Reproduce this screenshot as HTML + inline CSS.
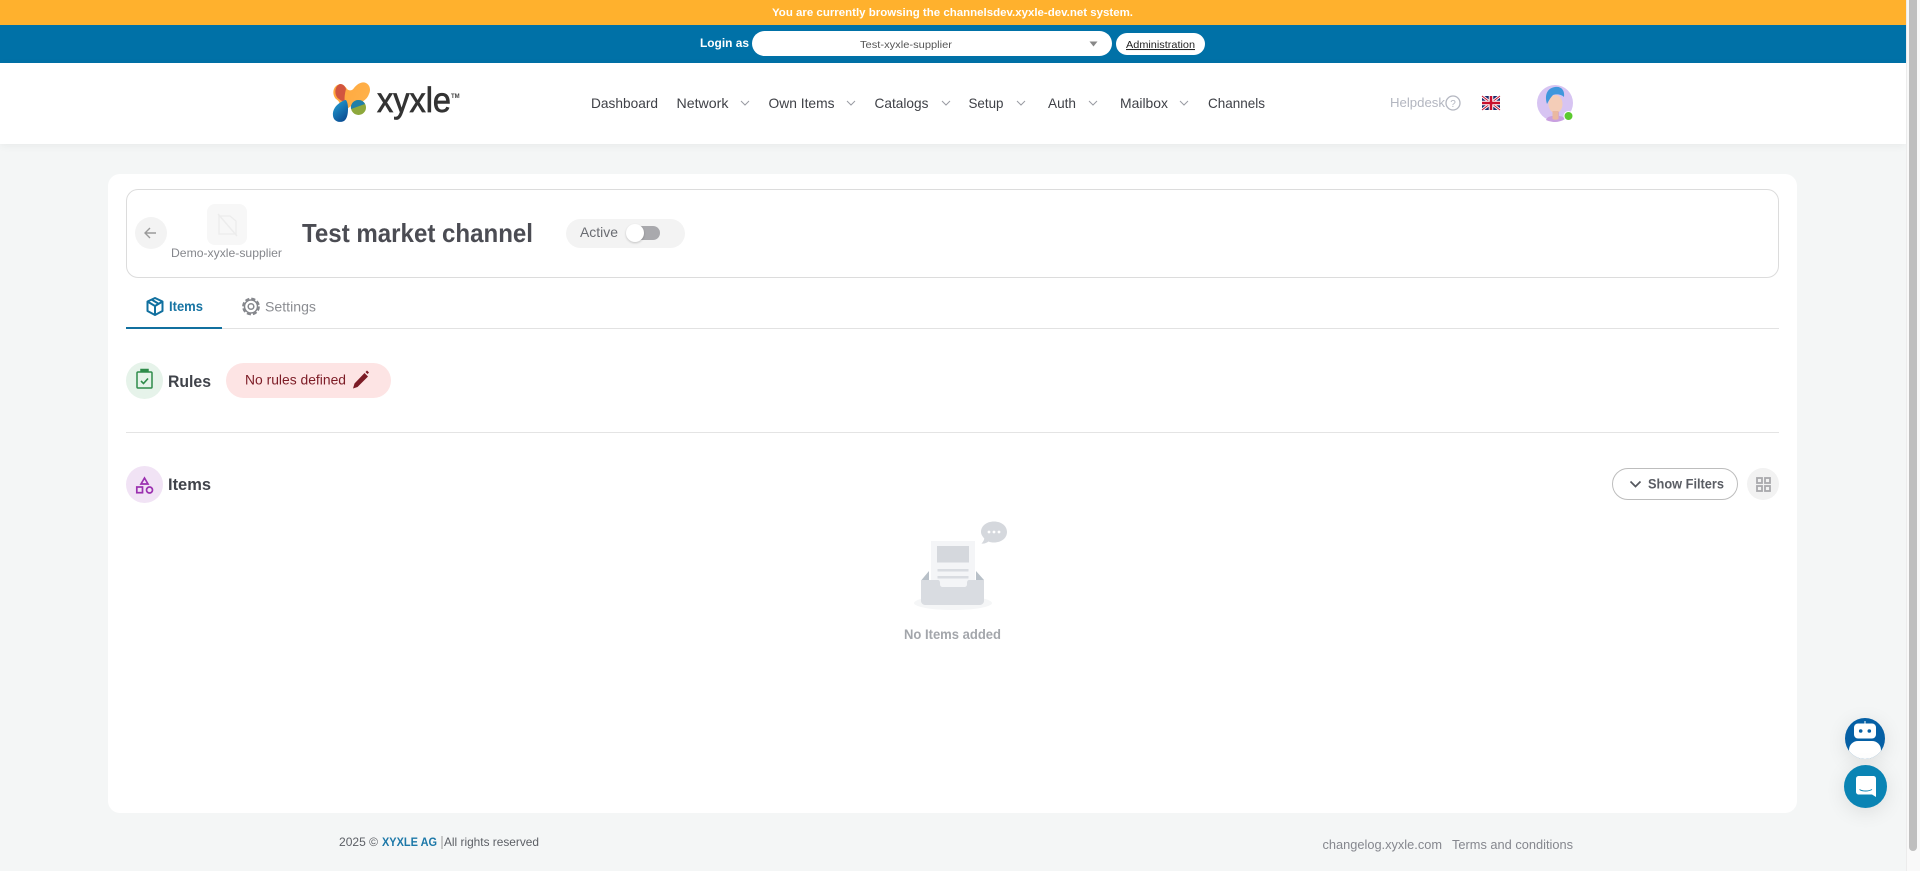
<!DOCTYPE html>
<html lang="en"><head><meta charset="utf-8"><title>Test market channel</title>
<style>
html,body{margin:0;padding:0;width:1920px;height:871px;overflow:hidden;background:#f4f6f6;font-family:"Liberation Sans",sans-serif}
.a{position:absolute;box-sizing:border-box}
svg{position:absolute;left:0;top:0}
text{font-family:"Liberation Sans",sans-serif}
</style></head><body>
<div class="a" style="left:0;top:0;width:1906px;height:25px;background:#ffb12d"></div>
<div class="a" style="left:0;top:25px;width:1906px;height:38px;background:#0071a7"></div>
<div class="a" style="left:0;top:63px;width:1906px;height:81px;background:#fff;box-shadow:0 2px 8px rgba(0,0,0,.05)"></div>
<div class="a" style="left:752px;top:31px;width:360px;height:25px;background:#fff;border-radius:13px"></div>
<div class="a" style="left:1116px;top:33px;width:89px;height:22px;background:#fff;border-radius:11px"></div>
<div class="a" style="left:108px;top:174px;width:1689px;height:639px;background:#fff;border-radius:12px"></div>
<div class="a" style="left:126px;top:189px;width:1653px;height:89px;border:1px solid #dcdcdc;border-radius:12px"></div>
<div class="a" style="left:135px;top:217px;width:32px;height:32px;background:#f3f3f3;border-radius:50%"></div>
<div class="a" style="left:207px;top:204px;width:40px;height:41px;background:#f7f7f7;border-radius:8px"></div>
<div class="a" style="left:566px;top:219px;width:119px;height:29px;background:#f3f3f3;border-radius:15px"></div>
<div class="a" style="left:630px;top:226px;width:30px;height:14px;background:#a9a9ad;border-radius:7px"></div>
<div class="a" style="left:626px;top:224px;width:18px;height:18px;background:#fff;border-radius:50%;box-shadow:0 1px 2px rgba(0,0,0,.2)"></div>
<div class="a" style="left:126px;top:328px;width:1653px;height:1px;background:#e2e2e2"></div>
<div class="a" style="left:126px;top:327px;width:96px;height:2px;background:#11709f"></div>
<div class="a" style="left:126px;top:362px;width:37px;height:37px;background:#e6f3ea;border-radius:50%"></div>
<div class="a" style="left:226px;top:363px;width:165px;height:35px;background:#fde4e4;border-radius:18px"></div>
<div class="a" style="left:126px;top:432px;width:1653px;height:1px;background:#e4e4e4"></div>
<div class="a" style="left:126px;top:466px;width:37px;height:37px;background:#f1e3f5;border-radius:50%"></div>
<div class="a" style="left:1612px;top:468px;width:126px;height:32px;border:1px solid #bdbdbd;border-radius:16px;background:#fff"></div>
<div class="a" style="left:1747px;top:468px;width:32px;height:32px;background:#f2f2f2;border-radius:50%"></div>
<div class="a" style="left:1845px;top:718px;width:40px;height:41px;border-radius:50%;background:#0560a5;box-shadow:0 4px 20px rgba(0,0,0,.1);overflow:hidden">
  <div class="a" style="left:4px;top:23px;width:32px;height:18px;background:#fff;border-radius:11px"></div>
</div>
<div class="a" style="left:1844px;top:765px;width:43px;height:43px;border-radius:50%;background:#0a84b4;box-shadow:0 4px 20px rgba(0,0,0,.1)"></div>
<div class="a" style="left:1906px;top:0;width:14px;height:871px;background:#f9f9f9;border-left:1px solid #ececec"></div>
<div class="a" style="left:1909px;top:0;width:8px;height:851px;background:#bfbfbf;border-radius:0 0 4px 4px"></div>

<svg width="1920" height="871" viewBox="0 0 1920 871" xmlns="http://www.w3.org/2000/svg">
<defs>
<linearGradient id="lo" x1="0" y1="0" x2="1" y2="0.4"><stop offset="0" stop-color="#ffa63c"/><stop offset="1" stop-color="#ffb14a"/></linearGradient>
<linearGradient id="lb" x1="0" y1="0" x2="0.6" y2="1"><stop offset="0" stop-color="#26a6d8"/><stop offset="1" stop-color="#0b4f95"/></linearGradient>
</defs>
<text x="772" y="16" font-size="11" font-weight="700" fill="#fff" textLength="361" lengthAdjust="spacingAndGlyphs">You are currently browsing the channelsdev.xyxle-dev.net system.</text>
<text x="700" y="47" font-size="12" font-weight="700" fill="#fff" textLength="49" lengthAdjust="spacingAndGlyphs">Login as</text>
<text x="860" y="48" font-size="10.5" fill="#555" textLength="92" lengthAdjust="spacingAndGlyphs">Test-xyxle-supplier</text>
<path d="M1089.500 41.500h8l-4 5z" fill="#888"/>
<text x="1126" y="48" font-size="10.5" fill="#222" textLength="69" lengthAdjust="spacingAndGlyphs" text-decoration="underline">Administration</text>

<!-- logo -->
<path d="M340 84c3 0 5 2 7 5 2 2 5 2 7-1 3-4 8-7 12-5 4 2 5 7 3 11-2 6-8 9-13 10-6 2-9 5-12 8-4 1-5-3-4-6 0-3-1-5-4-7-4-4-4-13 4-15z" fill="url(#lo)"/>
<path d="M340 84c3 0 5 2 6 5-1 4-2 9-1 13-2-1-4-1-6-3-5-3-5-13 1-15z" fill="#d2553f"/>
<path d="M346 100c2 3 2 7 2 9 0 5-1 10-4 12-4 2-10 1-11-5-1-6 3-11 8-14 2-1 3-2 5-2z" fill="url(#lb)"/>
<circle cx="358.500" cy="107.500" r="7.500" fill="#8ea83c"/>
<path d="M358 100a7.500 7.500 0 0 0-7 9l14-5a7.500 7.500 0 0 0-7-4z" fill="#1f7fa8"/>
<text x="377" y="112" font-size="35" fill="#333" stroke="#333" stroke-width=".7" textLength="74" lengthAdjust="spacingAndGlyphs">xyxle</text>
<text x="451" y="98" font-size="6" font-weight="700" fill="#444">TM</text>

<!-- nav -->
<g font-size="14" fill="#3f4147">
<text x="591" y="108" textLength="67" lengthAdjust="spacingAndGlyphs">Dashboard</text>
<text x="676.500" y="108" textLength="52" lengthAdjust="spacingAndGlyphs">Network</text>
<text x="768.500" y="108" textLength="66" lengthAdjust="spacingAndGlyphs">Own Items</text>
<text x="874.500" y="108" textLength="54" lengthAdjust="spacingAndGlyphs">Catalogs</text>
<text x="968.500" y="108" textLength="35" lengthAdjust="spacingAndGlyphs">Setup</text>
<text x="1048" y="108" textLength="28" lengthAdjust="spacingAndGlyphs">Auth</text>
<text x="1120" y="108" textLength="48" lengthAdjust="spacingAndGlyphs">Mailbox</text>
<text x="1208" y="108" textLength="57" lengthAdjust="spacingAndGlyphs">Channels</text>
</g>
<g fill="none" stroke="#9a9ca3" stroke-width="1">
<path d="M741 101l4 4 4-4M847 101l4 4 4-4M942 101l4 4 4-4M1017 101l4 4 4-4M1089 101l4 4 4-4M1180 101l4 4 4-4"/>
</g>
<text x="1390" y="107" font-size="13" fill="#b3b6c0" textLength="55" lengthAdjust="spacingAndGlyphs">Helpdesk</text>
<circle cx="1453" cy="103" r="7" fill="none" stroke="#b3b6c0" stroke-width="1.300"/>
<text x="1453" y="107" font-size="10" fill="#b3b6c0" text-anchor="middle">?</text>
<!-- flag -->
<g>
<rect x="1482" y="96" width="18" height="14" fill="#1b2a6b"/>
<path d="M1482 96l18 14M1500 96l-18 14" stroke="#fff" stroke-width="3"/>
<path d="M1482 96l18 14M1500 96l-18 14" stroke="#c8102e" stroke-width="1"/>
<path d="M1491 96v14M1482 103h18" stroke="#fff" stroke-width="4.500"/>
<path d="M1491 96v14M1482 103h18" stroke="#c8102e" stroke-width="2.500"/>
</g>
<!-- avatar -->
<circle cx="1555" cy="103" r="18" fill="#d7c4f2"/>
<path d="M1546 120c1-3 4-4 7-4v-5h6v5c2 0 5 1 6 3-3 2-7 3-10 3s-7-1-9-2z" fill="#c9a0e0"/>
<ellipse cx="1555.500" cy="104" rx="7" ry="9" fill="#f4cdb8"/>
<path d="M1547 104c-3-10 1-16 8-17 6-1 10 3 9 10-3-3-8-3-11-2-2 2-4 5-6 9z" fill="#3f97dc"/>
<path d="M1552.500 111h6v8c-2 1-4 1-6 0z" fill="#eab8a0"/>
<circle cx="1568.500" cy="116" r="4.500" fill="#5cc92f" stroke="#fff" stroke-width="1"/>

<!-- header card content -->
<path d="M156 233h-11M150 228l-5 5 5 5" fill="none" stroke="#9a9a9a" stroke-width="1.400"/>
<g fill="none" stroke="#ececec" stroke-width="1.200">
<path d="M219 216h11l6 5v13h-17z"/><path d="M218 214l19 22" stroke-width="1.400"/>
</g>
<text x="171" y="257" font-size="12" fill="#85878c" textLength="111" lengthAdjust="spacingAndGlyphs">Demo-xyxle-supplier</text>
<text x="302" y="242" font-size="26" font-weight="700" fill="#4b4c53" textLength="231" lengthAdjust="spacingAndGlyphs">Test market channel</text>
<text x="580" y="237" font-size="14" fill="#6a6c72" textLength="38" lengthAdjust="spacingAndGlyphs">Active</text>

<!-- tabs -->
<g fill="none" stroke="#11709f" stroke-width="2" stroke-linejoin="round">
<path d="M155 298l7.500 3.500v9.500L155 315l-7.500-4v-9.500z"/><path d="M147.500 301.500L155 306l7.500-4.500M155 306v9M151.500 299.500l7.500 4.500"/>
</g>
<text x="169" y="311" font-size="14" font-weight="700" fill="#1774a3" textLength="34" lengthAdjust="spacingAndGlyphs">Items</text>
<g fill="none" stroke="#85878c">
<circle cx="251" cy="306.500" r="6.500" stroke-width="1.500"/>
<circle cx="251" cy="306.500" r="7.800" stroke-width="2.200" stroke-dasharray="4.100 2.030"/>
<circle cx="251" cy="306.500" r="2.800" stroke-width="1.500"/>
</g>
<text x="265" y="311.500" font-size="14" fill="#8b8d92" textLength="51" lengthAdjust="spacingAndGlyphs">Settings</text>

<!-- rules -->
<g fill="none" stroke="#2e8b4a" stroke-width="1.500">
<rect x="137" y="372" width="15" height="16" rx="1"/>
<path d="M141 372v-2.500h7v2.500" fill="#2e8b4a"/>
<path d="M141 381l2.500 2.500 4.500-5" stroke-width="1.600"/>
</g>
<text x="168" y="387" font-size="17" font-weight="700" fill="#40434a" textLength="43" lengthAdjust="spacingAndGlyphs">Rules</text>
<text x="245" y="384.500" font-size="14" fill="#7c1b25" textLength="101" lengthAdjust="spacingAndGlyphs">No rules defined</text>
<path d="M353 388.500l1.500-5 10-10.500 3.500 3.500-10.500 10.500zM365.500 372l1.500-1.500 2 2-1.500 1.500z" fill="#7c1b25"/>

<!-- items -->
<g fill="none" stroke="#9b30b0" stroke-width="1.700">
<path d="M144.500 478l3.500 6h-7z"/><rect x="136.800" y="487" width="5.700" height="5.700"/><circle cx="149.500" cy="490" r="3"/>
</g>
<text x="168" y="490" font-size="17" font-weight="700" fill="#40434a" textLength="43" lengthAdjust="spacingAndGlyphs">Items</text>
<path d="M1630.500 481.500l5 5 5-5" fill="none" stroke="#55585f" stroke-width="1.700"/>
<text x="1648" y="488.500" font-size="14" font-weight="700" fill="#5a5d64" textLength="76" lengthAdjust="spacingAndGlyphs">Show Filters</text>
<g fill="none" stroke="#a8a8ac" stroke-width="1.800">
<rect x="1757" y="478" width="5" height="5"/><rect x="1765" y="478" width="5" height="5"/>
<rect x="1757" y="486" width="5" height="5"/><rect x="1765" y="486" width="5" height="5"/>
</g>

<!-- empty -->
<ellipse cx="953" cy="603" rx="39" ry="7" fill="#f5f6f7"/>
<path d="M921.500 580l7.500-9v9zM984 580l-8-9v9z" fill="#b8c0c8"/>
<rect x="931" y="541" width="44" height="47" fill="#f4f5f7"/>
<rect x="937" y="546" width="32" height="16.500" fill="#d5d8dd"/>
<rect x="937.500" y="569" width="31" height="2.500" fill="#d9dce1"/>
<rect x="937.500" y="576" width="31" height="2.500" fill="#d9dce1"/>
<path d="M921 580h17c1 0 2 1 2 3v1c0 2 1 3 3 3h21c2 0 3-1 3-3v-1c0-2 1-3 2-3h15v21c0 2-2 4-4 4h-55c-2 0-4-2-4-4z" fill="#d9dce1"/>
<path d="M994 521.500c7.500 0 13 4.500 13 10.500s-5.500 10.500-13 10.500c-2 0-4-.3-5.500-1-2 1.500-4.500 2.500-7 2 1.300-1.300 2.500-3 2.800-5-1.600-1.800-3.300-4-3.300-6.500 0-6 5.500-10.500 13-10.500z" fill="#d5d8dd"/>
<g fill="#fff"><circle cx="989" cy="532" r="1.400"/><circle cx="994" cy="532" r="1.400"/><circle cx="999" cy="532" r="1.400"/></g>
<text x="904" y="639" font-size="13.500" font-weight="700" fill="#a3a6ab" textLength="97" lengthAdjust="spacingAndGlyphs">No Items added</text>

<!-- footer -->
<text x="339" y="846" font-size="12" fill="#5d6066" textLength="39" lengthAdjust="spacingAndGlyphs">2025 ©</text>
<text x="382" y="846" font-size="12" font-weight="700" fill="#1c78a8" textLength="55" lengthAdjust="spacingAndGlyphs">XYXLE AG</text>
<rect x="441.500" y="836" width="1" height="13" fill="#9a9a9a"/>
<text x="444" y="846" font-size="12" fill="#5d6066" textLength="95" lengthAdjust="spacingAndGlyphs">All rights reserved</text>
<text x="1322.500" y="849" font-size="13" fill="#85878e" textLength="119.500" lengthAdjust="spacingAndGlyphs">changelog.xyxle.com</text>
<text x="1452" y="849" font-size="13" fill="#85878e" textLength="121" lengthAdjust="spacingAndGlyphs">Terms and conditions</text>

<!-- bot -->
<rect x="1854" y="723.500" width="22" height="15" rx="4" fill="#fff"/>
<rect x="1864.500" y="721" width="1" height="3" fill="#fff"/>
<circle cx="1860.700" cy="731" r="1.800" fill="#0560a5"/><circle cx="1869.300" cy="731" r="1.800" fill="#0560a5"/>
<!-- chat -->
<path d="M1859 776h14c2 0 3 1 3 3v18l-4-2.500h-13c-2 0-3-1-3-3V779c0-2 1-3 3-3z" fill="#fff"/>
<path d="M1859.500 789.500c3 2 9 2 12.500 0" fill="none" stroke="#0a84b4" stroke-width="1"/>
</svg>
</body></html>
